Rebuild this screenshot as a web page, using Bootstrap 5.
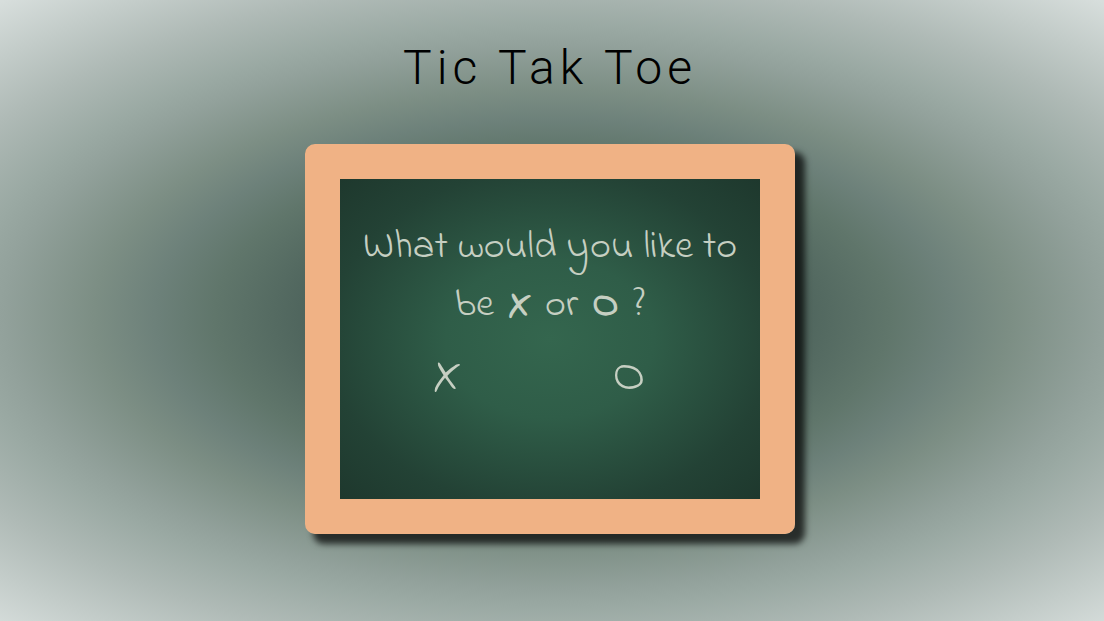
<!DOCTYPE html>
<html lang="en">
<head>
<meta charset="utf-8">
<meta name="viewport" content="width=device-width, initial-scale=1">
<title>Tic Tak Toe</title>
<link href="https://cdn.jsdelivr.net/npm/bootstrap@5.3.0/dist/css/bootstrap.min.css" rel="stylesheet">
<style>
body {
  background: radial-gradient(ellipse 68% 60% at 50% 51%, #2f4f4f 0%, #4f655d 33%, #60766b 45%, #6d817a 53%, #7c8e84 61%, #92a19b 73%, #9aa9a3 78%, #afbab6 90%, #d7dedc 112%) no-repeat;
}
.game-title {
  font: 300 48px/56px Roboto, sans-serif;
  letter-spacing: 5px;
  color: #000;
}
.chalkboard {
  width: 490px;
  max-width: 100%;
  min-height: 390px;
  border: 35px solid #f0b285;
  border-radius: 10px;
  background: radial-gradient(ellipse at center, #34664e 0%, #2f5d48 35%, #234235 75%, #1e382d 100%) padding-box;
  box-shadow: 9px 9px 6px 1px rgba(0, 0, 0, .7);
  font-family: "Indie Flower", Lato, sans-serif;
  color: #c6cfc2;
}
.question { font-size: 40px; line-height: 58px; }
.choice {
  font: inherit;
  font-size: 50px;
  line-height: 52px;
  color: inherit;
  background: none;
}
</style>
</head>
<body class="min-vh-100">
<main class="container-fluid d-flex flex-column align-items-center pt-4 px-3">
  <h1 class="game-title text-center mt-3 mb-5 me-1">Tic Tak Toe</h1>
  <section class="chalkboard px-3 pt-4 me-1">
    <p class="question text-center mt-3 mb-3">What would you like to be <strong class="px-1">X</strong> or <strong class="px-1">O</strong> ?</p>
    <div class="pe-4">
      <div class="row gx-0">
        <div class="col-6 text-center"><button type="button" class="choice border-0 p-0">X</button></div>
        <div class="col-6 text-center"><button type="button" class="choice border-0 p-0">O</button></div>
      </div>
    </div>
  </section>
</main>
<script src="https://cdn.jsdelivr.net/npm/bootstrap@5.3.0/dist/js/bootstrap.bundle.min.js"></script>
</body>
</html>
